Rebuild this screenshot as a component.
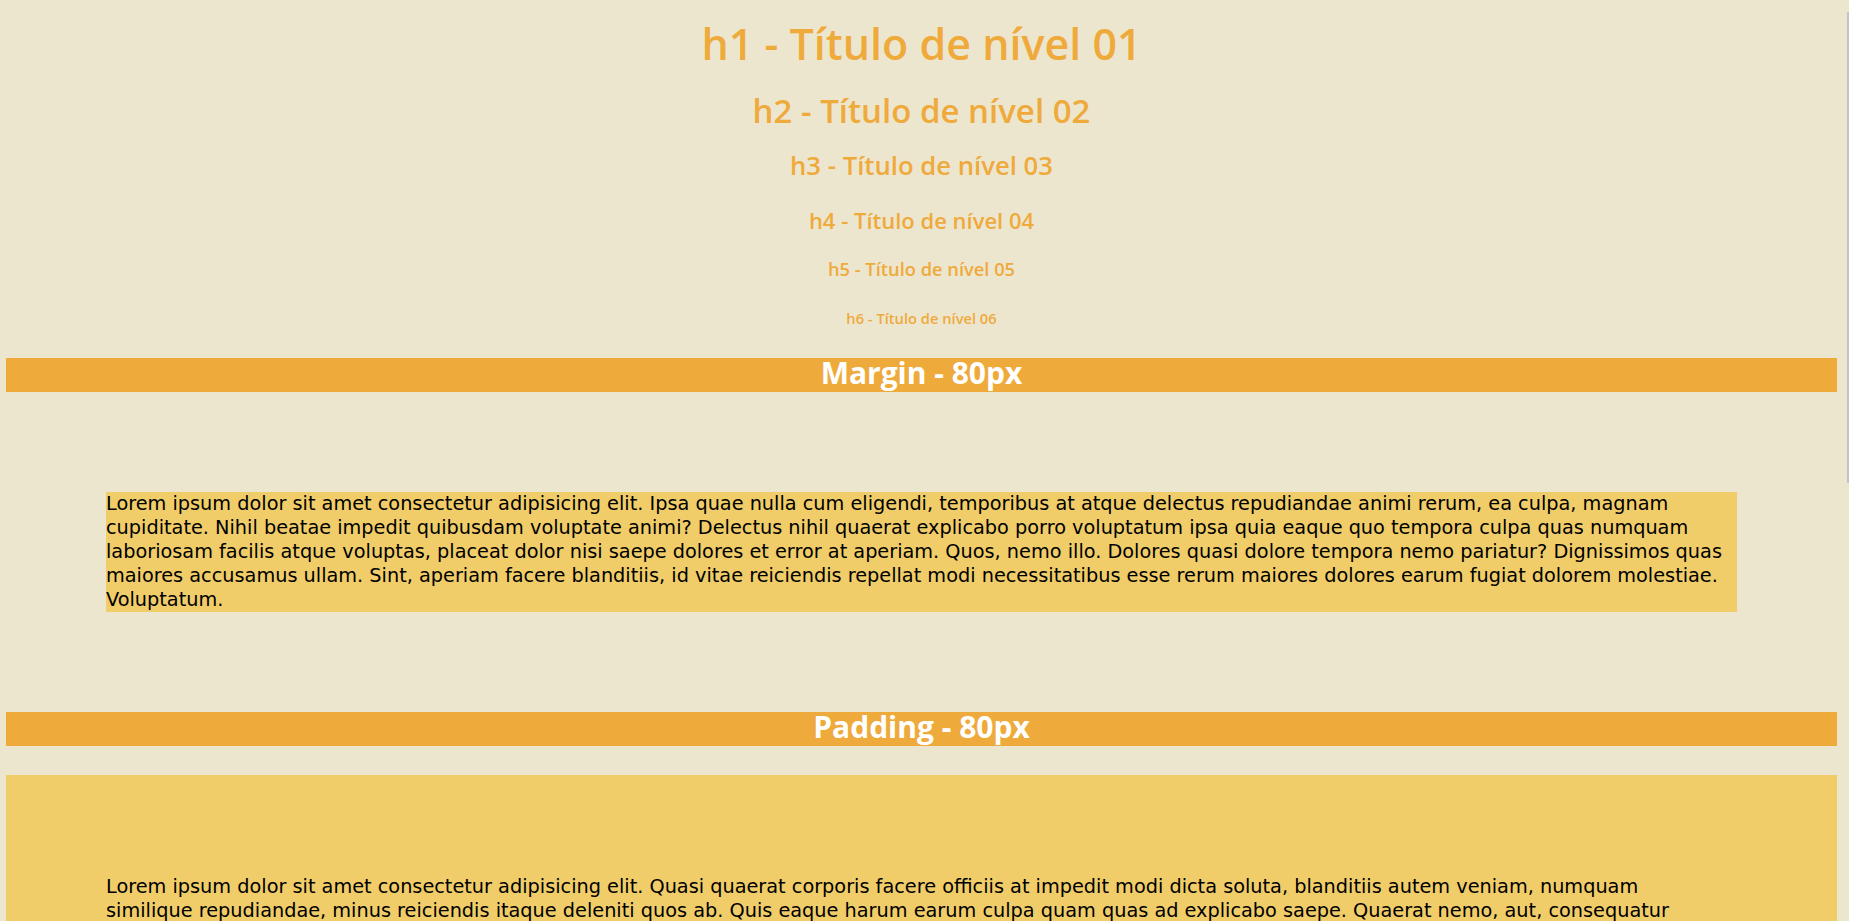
const margemTexto =
  'Lorem ipsum dolor sit amet consectetur adipisicing elit. Ipsa quae nulla cum eligendi, temporibus at atque delectus repudiandae animi rerum, ea culpa, magnam cupiditate. Nihil beatae impedit quibusdam voluptate animi? Delectus nihil quaerat explicabo porro voluptatum ipsa quia eaque quo tempora culpa quas numquam laboriosam facilis atque voluptas, placeat dolor nisi saepe dolores et error at aperiam. Quos, nemo illo. Dolores quasi dolore tempora nemo pariatur? Dignissimos quas maiores accusamus ullam. Sint, aperiam facere blanditiis, id vitae reiciendis repellat modi necessitatibus esse rerum maiores dolores earum fugiat dolorem molestiae. Voluptatum.';

const paddingTexto =
  'Lorem ipsum dolor sit amet consectetur adipisicing elit. Quasi quaerat corporis facere officiis at impedit modi dicta soluta, blanditiis autem veniam, numquam similique repudiandae, minus reiciendis itaque deleniti quos ab. Quis eaque harum earum culpa quam quas ad explicabo saepe. Quaerat nemo, aut, consequatur voluptatibus natus odit nesciunt sequi rem dolorem fugit laudantium? Amet, quibusdam. Laboriosam, nulla ipsam.';

export default function App() {
  return (
    <div className="relative h-[921px] overflow-hidden bg-[#ede6cf] pl-[6px] pr-[12px] font-['DejaVu_Sans',sans-serif] text-black">
      {/* Títulos */}
      <div className="text-center font-['Open_Sans',sans-serif] font-semibold text-[#efaa3c]">
        <h1 className="mt-[14px] text-[43px] leading-[60px]">h1 - Título de nível 01</h1>
        <h2 className="mt-[15px] text-[33px] leading-[44px]">h2 - Título de nível 02</h2>
        <h3 className="mt-[16px] text-[25.7px] leading-[34px]">h3 - Título de nível 03</h3>
        <h4 className="mt-[22px] text-[22px] leading-[30px]">h4 - Título de nível 04</h4>
        <h5 className="mt-[22px] text-[18.3px] leading-[24px]">h5 - Título de nível 05</h5>
        <h6 className="mt-[27px] text-[14.7px] leading-[20px]">h6 - Título de nível 06</h6>
      </div>

      {/* Margin */}
      <h2 className="mt-[30px] h-[34px] bg-[#efaa3c] pb-[4px] text-center font-['Open_Sans',sans-serif] text-[30px] font-bold leading-[30px] text-white">
        Margin - 80px
      </h2>
      <p className="mx-[100px] mt-[100px] bg-[#f0cd69] text-[19.3px] leading-[24px]">{margemTexto}</p>

      {/* Padding */}
      <h2 className="mt-[100px] h-[34px] bg-[#efaa3c] pb-[4px] text-center font-['Open_Sans',sans-serif] text-[30px] font-bold leading-[30px] text-white">
        Padding - 80px
      </h2>
      <div className="mt-[29px] bg-[#f0cd69] pt-[100px] pb-[100px]">
        <p className="ml-[100px] mr-[110px] text-[19.3px] leading-[24px]">{paddingTexto}</p>
      </div>

      {/* barra de rolagem */}
      <div className="absolute right-0 top-[12px] h-[471px] w-[2px] bg-[#c4c4c4]" />
    </div>
  );
}
